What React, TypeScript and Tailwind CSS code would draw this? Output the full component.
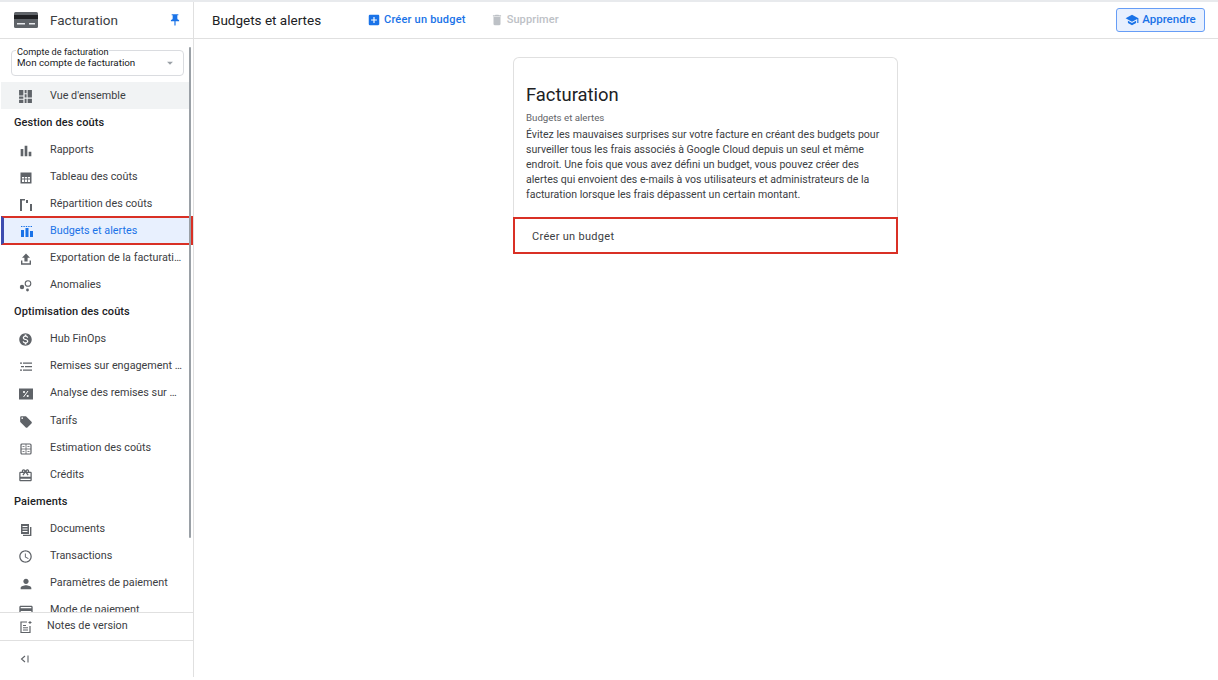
import React from 'react';
import {
  MdPushPin, MdAddBox, MdDelete, MdSchool, MdBarChart, MdMonetizationOn,
  MdLocalOffer, MdAccessTime, MdPerson, MdOutlineCreditCard, MdArrowDropDown, MdOutlineRedeem,
} from 'react-icons/md';

type IconProps = { className?: string };

function OverviewIcon({ className }: IconProps) {
  return (
    <svg viewBox="0 0 14 14" width="15" height="15" className={className} fill="currentColor">
      <path d="M1 1h4v5H1zM1 7h4v2H1zM1 10h4v3H1zM6.2 1h1.8v3H6.2zM6.2 5h1.8v3H6.2zM6.2 9h1.8v4H6.2zM9 1h4v7H9zM9 9h4v4H9z" />
    </svg>
  );
}

function TableIcon({ className }: IconProps) {
  return (
    <svg viewBox="0 0 14 14" width="14" height="14" className={className} fill="currentColor">
      <path fillRule="evenodd" d="M1.5 1.5h11v11h-11zM3 6v1.5h2.2V6zm3 0v1.5h2.2V6zm3 0v1.5h2V6zM3 8.5V11h2.2V8.5zm3 0V11h2.2V8.5zm3 0V11h2V8.5z" />
    </svg>
  );
}

function BreakdownIcon({ className }: IconProps) {
  return (
    <svg viewBox="0 0 14 14" width="14" height="14" className={className} fill="currentColor">
      <path d="M1 1h2v12H1zM3 1h3v1.6H3zM7 2h2v3H7zM11 6h2v7h-2z" />
    </svg>
  );
}

function BudgetIcon({ className }: IconProps) {
  return (
    <svg viewBox="0 0 14 14" width="14" height="14" className={className} fill="currentColor">
      <path d="M1 6h3v7H1zM5.5 4h3v9h-3zM10 7h3v6h-3z" />
      <path d="M1 2h1.4v1H1zM3.4 2h1.4v1H3.4zM5.8 2h1.4v1H5.8zM8.2 2h1.4v1H8.2zM10.6 2H12v1h-1.4z" />
    </svg>
  );
}

function ExportIcon({ className }: IconProps) {
  return (
    <svg viewBox="0 0 14 14" width="14" height="14" className={className} fill="currentColor">
      <path d="M7 1.5 L11 5.8 H8.6 V9.5 H5.4 V5.8 H3 Z" />
      <path d="M2 8.5h1.4v2.8h7.2V8.5H12v4.2H2z" />
    </svg>
  );
}

function AnomalyIcon({ className }: IconProps) {
  return (
    <svg viewBox="0 0 14 14" width="14" height="14" className={className} fill="none" stroke="currentColor">
      <circle cx="3" cy="8" r="2.2" fill="currentColor" stroke="none" />
      <circle cx="9" cy="4.5" r="2.8" strokeWidth="1.1" />
      <circle cx="8.5" cy="11" r="1.4" fill="currentColor" stroke="none" />
    </svg>
  );
}

function CommitIcon({ className }: IconProps) {
  return (
    <svg viewBox="0 0 14 14" width="14" height="14" className={className} fill="currentColor">
      <path d="M4 2.5h9v1.2H4zM6 6h7v1.2H6zM4 9.5h9v1.2H4zM1 2.5h2v1.2H1zM2 6h3v1.2H2zM1 9.5h2v1.2H1z" />
    </svg>
  );
}

function PercentIcon({ className }: IconProps) {
  return (
    <svg viewBox="0 0 14 14" width="14" height="14" className={className}>
      <path d="M0 1.5h14v11H0z" fill="currentColor" />
      <path d="M4.5 10 L9 4" stroke="#fff" strokeWidth="1" />
      <circle cx="5" cy="5" r="1.1" fill="#fff" />
      <circle cx="8.7" cy="9" r="1.1" fill="#fff" />
    </svg>
  );
}

function EstimateIcon({ className }: IconProps) {
  return (
    <svg viewBox="0 0 14 14" width="14" height="14" className={className} fill="none" stroke="currentColor" strokeWidth="1.2">
      <rect x="2" y="2" width="10" height="10" rx="1" />
      <path d="M7 2v10M2 7h10" strokeWidth="0.8" />
      <path d="M3.5 4.5h2M8.5 4.5h2M3.5 9.5h2M8.5 9.5h2" strokeWidth="0.8" />
    </svg>
  );
}

function DocumentsIcon({ className }: IconProps) {
  return (
    <svg viewBox="0 0 14 14" width="14" height="14" className={className} fill="currentColor">
      <path fillRule="evenodd" d="M2 1h8v10H2zM3.5 3v1h5V3zm0 2.5v1h5v-1zm0 2.5v1h5V8z" />
      <path d="M11 4h1.4v9H4v-1.2h7z" />
    </svg>
  );
}

function NotesIcon({ className }: IconProps) {
  return (
    <svg viewBox="0 0 14 14" width="14" height="14" className={className} fill="none" stroke="currentColor" strokeWidth="1.2">
      <path d="M8 2H2v10.5h9V6" />
      <path d="M4 5.5h3M4 7.8h5M4 10h5" strokeWidth="1" />
      <path d="M11 1v3M9.5 2.5h3" strokeWidth="1" />
    </svg>
  );
}

function CollapseIcon({ className }: IconProps) {
  return (
    <svg viewBox="0 0 10 10" width="10" height="10" className={className} fill="none" stroke="currentColor" strokeWidth="1.1">
      <path d="M5 2 L1.5 5 L5 8" />
      <path d="M8 1.5v7" />
    </svg>
  );
}

type Item = { label: string; icon: React.ReactNode };

const costItems: Item[] = [
  { label: 'Rapports', icon: <MdBarChart size={16} /> },
  { label: 'Tableau des coûts', icon: <TableIcon /> },
  { label: 'Répartition des coûts', icon: <BreakdownIcon /> },
];

const costItems2: Item[] = [
  { label: 'Exportation de la facturati…', icon: <ExportIcon /> },
  { label: 'Anomalies', icon: <AnomalyIcon /> },
];

const optimItems: Item[] = [
  { label: 'Hub FinOps', icon: <MdMonetizationOn size={15} /> },
  { label: 'Remises sur engagement …', icon: <CommitIcon /> },
  { label: 'Analyse des remises sur …', icon: <PercentIcon /> },
];

const optimItems2: Item[] = [
  { label: 'Tarifs', icon: <MdLocalOffer size={14} /> },
  { label: 'Estimation des coûts', icon: <EstimateIcon /> },
  { label: 'Crédits', icon: <MdOutlineRedeem size={15} /> },
];

const payItems: Item[] = [
  { label: 'Documents', icon: <DocumentsIcon /> },
  { label: 'Transactions', icon: <MdAccessTime size={15} /> },
  { label: 'Paramètres de paiement', icon: <MdPerson size={16} /> },
  { label: 'Mode de paiement', icon: <MdOutlineCreditCard size={16} /> },
];

function NavRow({ item }: { item: Item }) {
  return (
    <div className="flex items-center h-[27px] shrink-0 text-[#3c4043]">
      <span className="w-[50px] shrink-0 flex justify-center pl-[1px] text-[#5f6368]">{item.icon}</span>
      <span className="whitespace-nowrap">{item.label}</span>
    </div>
  );
}

function SectionTitle({ label }: { label: string }) {
  return (
    <div className="h-[27px] shrink-0 flex items-center pl-[14px] text-[11px] text-[#202124] font-medium tracking-[0.1px]">
      {label}
    </div>
  );
}

export default function App() {
  return (
    <div className="h-[677px] w-[1218px] overflow-hidden bg-white flex flex-col text-[10.8px] text-[#202124] font-['Roboto','Liberation_Sans',sans-serif]">
      <div className="h-[2px] bg-[#e8eaed] shrink-0" />
      <div className="flex flex-1 min-h-0">
        {/* sidebar */}
        <aside className="relative w-[194px] shrink-0 border-r border-[#e0e0e0] flex flex-col">
          <div className="h-[37px] shrink-0 border-b border-[#e0e0e0] flex items-center pl-[14px] pr-[11px]">
            <svg viewBox="0 0 24 16" width="24" height="16" className="shrink-0">
              <rect width="24" height="16" rx="1.5" fill="#5f6368" />
              <rect y="3" width="24" height="4" fill="#202124" />
              <rect x="3" y="11" width="8" height="1.5" fill="#e8eaed" />
              <rect x="15" y="11" width="6" height="1.5" fill="#e8eaed" />
            </svg>
            <span className="ml-[12px] flex-1 text-[13.5px] text-[#3c4043]">Facturation</span>
            <MdPushPin size={14} className="text-[#1a73e8]" />
          </div>

          <div className="flex-1 min-h-0 overflow-hidden flex flex-col">
            <div className="mt-[11px] ml-[11px] mr-[9px] h-[26px] shrink-0 border border-[#dadce0] rounded-[4px] flex items-center pl-[5px] pr-[6px] relative">
              <span className="absolute -top-[4px] left-[4px] bg-white px-[1px] leading-[10px] text-[9.2px] text-[#202124]">
                Compte de facturation
              </span>
              <span className="flex-1 mt-[1px] text-[9.8px] text-[#202124] truncate">Mon compte de facturation</span>
              <MdArrowDropDown size={14} className="text-[#9aa0a6]" />
            </div>

            <div className="mt-[6px] mb-[1px] mr-[3px] ml-[1px] h-[27px] pt-[2px] shrink-0 flex items-center bg-[#f1f3f4] text-[#3c4043]">
              <span className="w-[49px] shrink-0 flex justify-center text-[#5f6368]"><OverviewIcon /></span>
              <span>Vue d'ensemble</span>
            </div>

            <SectionTitle label="Gestion des coûts" />
            {costItems.map((it) => <NavRow key={it.label} item={it} />)}

            <div className="-mt-[2px] h-[29px] w-[192px] pt-[1px] shrink-0 flex items-center ml-[1px] text-[#1a73e8] bg-[#e8f0fe] border-2 border-l-[3px] border-[#d93025] border-l-[#3c4cb0]">
              <span className="w-[46px] shrink-0 flex justify-center"><BudgetIcon /></span>
              <span>Budgets et alertes</span>
            </div>

            {costItems2.map((it) => <NavRow key={it.label} item={it} />)}
            <SectionTitle label="Optimisation des coûts" />
            {optimItems.map((it) => <NavRow key={it.label} item={it} />)}
            <div className="h-px shrink-0" />
            {optimItems2.map((it) => <NavRow key={it.label} item={it} />)}
            <SectionTitle label="Paiements" />
            {payItems.map((it) => <NavRow key={it.label} item={it} />)}
          </div>

          {/* scrollbar lies over the list */}
          <div className="absolute left-[189px] top-[45px] w-[2px] h-[491px] bg-[#9aa0a6] rounded-full" />

          <div className="h-[28px] shrink-0 border-t border-[#e0e0e0] flex items-center text-[#3c4043]">
            <span className="w-[47px] shrink-0 flex justify-center pl-[4px] text-[#5f6368]"><NotesIcon /></span>
            <span>Notes de version</span>
          </div>
          <div className="h-[37px] shrink-0 border-t border-[#e0e0e0] flex items-center pl-[20px] text-[#5f6368]">
            <CollapseIcon />
          </div>
        </aside>

        {/* main */}
        <main className="flex-1 min-w-0 flex flex-col">
          <div className="h-[37px] shrink-0 border-b border-[#e0e0e0] flex items-center pl-[18px] pr-[13px]">
            <span className="text-[13.5px] text-[#202124] w-[155px]">Budgets et alertes</span>
            <span className="flex items-center text-[#1a73e8]">
              <MdAddBox size={14} />
              <span className="ml-[3px] mt-[1px] text-[11px] font-medium tracking-[0.2px]">Créer un budget</span>
            </span>
            <span className="flex items-center ml-[24px] text-[#bdc1c6]">
              <MdDelete size={14} />
              <span className="ml-[3px] mt-[1px] text-[11px] font-medium tracking-[0.1px]">Supprimer</span>
            </span>
            <span className="ml-auto h-[24px] w-[89px] flex items-center justify-center gap-[3px] rounded-[3px] border border-[#669df6] bg-[#e8f0fe] text-[#1a73e8] text-[11.5px] font-medium">
              <MdSchool size={14} />
              Apprendre
            </span>
          </div>

          <div className="pt-[18px] pl-[319px]">
            <div className="w-[385px] rounded-t-[6px] border-x border-t border-[#e0e0e0]">
              <div className="px-[12px] pt-[25px] pb-[15px]">
                <h1 className="text-[18.4px] leading-[24px] text-[#202124]">Facturation</h1>
                <p className="mt-[5px] text-[9.7px] leading-[12px] text-[#5f6368]">Budgets et alertes</p>
                <p className="mt-[3px] text-[10.55px] leading-[15px] text-[#3c4043]">
                  Évitez les mauvaises surprises sur votre facture en créant des budgets pour surveiller tous les frais associés à Google Cloud depuis un seul et même endroit. Une fois que vous avez défini un budget, vous pouvez créer des alertes qui envoient des e-mails à vos utilisateurs et administrateurs de la facturation lorsque les frais dépassent un certain montant.
                </p>
              </div>
              <div className="-mx-[1px] h-[37px] border-2 border-[#d93025] flex items-center pl-[17px] pt-[3px] text-[11px] text-[#3c4043] tracking-[0.3px]">
                Créer un budget
              </div>
            </div>
          </div>
        </main>
      </div>
    </div>
  );
}
